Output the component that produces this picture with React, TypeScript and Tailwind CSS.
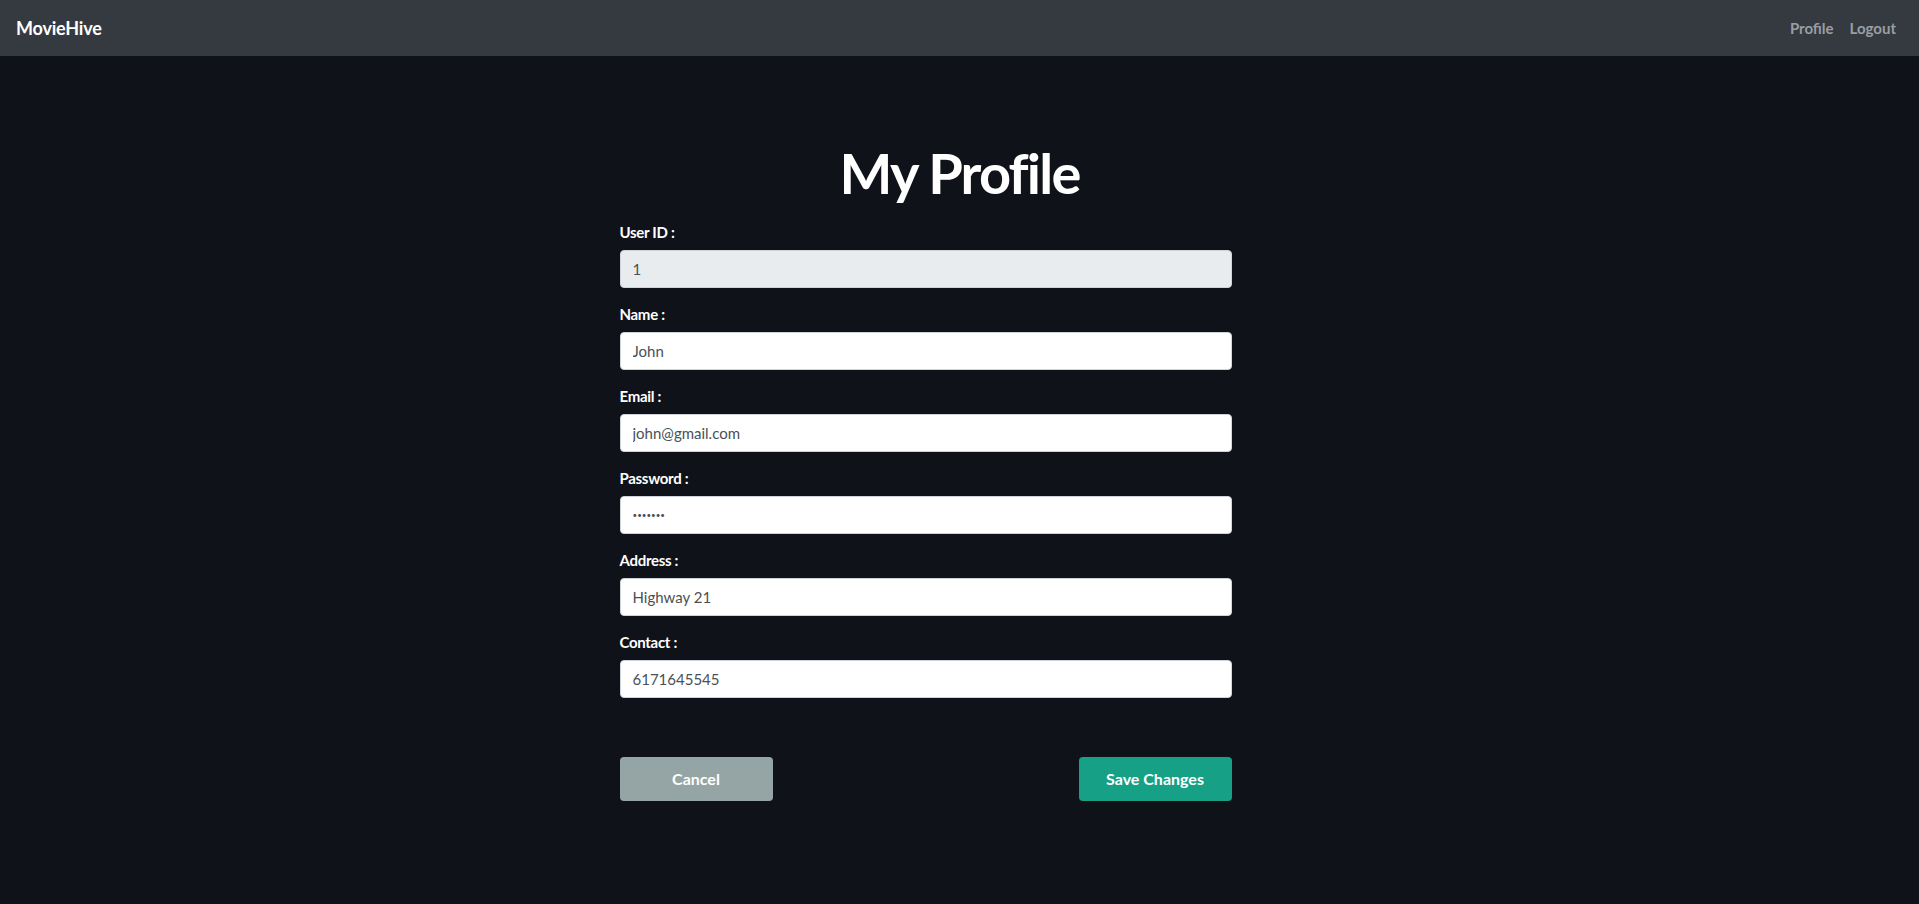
import { useState } from "react";

const fields = [
  { key: "id", label: "User ID", value: "1", type: "text", disabled: true },
  { key: "name", label: "Name", value: "John", type: "text" },
  { key: "email", label: "Email", value: "john@gmail.com", type: "email" },
  { key: "password", label: "Password", value: "1234567", type: "password" },
  { key: "address", label: "Address", value: "Highway 21", type: "text" },
  { key: "contact", label: "Contact", value: "6171645545", type: "text" },
];

function Navbar() {
  return (
    <nav className="h-[56px] bg-[#343a40] flex items-center justify-between pl-[16px] pr-[23px]">
      <a href="#" className="text-white font-bold text-[18px] tracking-[-0.2px]">
        MovieHive
      </a>
      <div className="flex items-center gap-[16px] text-[15px] font-bold text-[#9a9ea2]">
        <a href="#">Profile</a>
        <a href="#">Logout</a>
      </div>
    </nav>
  );
}

export default function App() {
  const [values, setValues] = useState<Record<string, string>>(
    Object.fromEntries(fields.map((f) => [f.key, f.value]))
  );

  return (
    <div
      className="min-h-screen bg-[#10121a]"
      style={{ fontFamily: "Lato, 'Open Sans', sans-serif" }}
    >
      <Navbar />

      <main className="w-[680px] mx-auto pt-[83px]">
        <h1 className="text-center text-white font-bold text-[56px] leading-[1.2] tracking-[-1.8px] mb-[14px]">
          My Profile
        </h1>

        <form className="w-[612px]" onSubmit={(e) => e.preventDefault()}>
          {fields.map((f) => (
            <div key={f.key} className="mb-[14px]">
              <label className="block text-white font-bold text-[15px] leading-[24px] mb-[6px] tracking-[-0.3px]">
                {f.label} :
              </label>
              <input
                type={f.type}
                value={values[f.key]}
                disabled={f.disabled}
                onChange={(e) =>
                  setValues({ ...values, [f.key]: e.target.value })
                }
                className={`block w-full h-[38px] px-[12px] rounded-[4px] border border-[#ced4da] text-[#495057] outline-none ${
                  f.type === "password" ? "text-[8px]" : "text-[15px]"
                } ${f.disabled ? "bg-[#e9ecef]" : "bg-white"}`}
              />
            </div>
          ))}

          {/* margins collapse with the last field's mb */}
          <div className="flex justify-between mt-[59px]">
            <button
              type="button"
              className="w-[153px] h-[44px] rounded-[4px] bg-[#95a5a6] text-white font-bold text-[16px]"
            >
              Cancel
            </button>
            <button
              type="submit"
              className="w-[153px] h-[44px] rounded-[4px] bg-[#16a085] text-white font-bold text-[16px]"
            >
              Save Changes
            </button>
          </div>
        </form>
      </main>
    </div>
  );
}
